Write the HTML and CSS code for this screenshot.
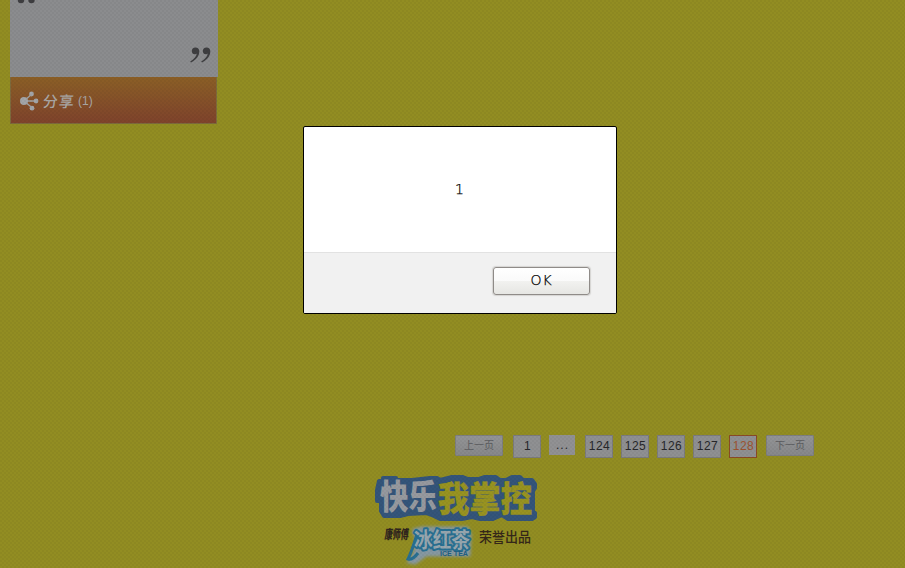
FILE: index.html
```html
<!DOCTYPE html>
<html lang="zh-CN">
<head>
<meta charset="utf-8">
<title>快乐我掌控</title>
<link rel="stylesheet" href="styles.css">
</head>
<body>
<main class="page">
  <section class="card">
    <div class="quote">
      <svg class="quote-open" width="20" height="4" viewBox="0 0 20 4"><circle cx="4" cy="0" r="3.2"/><circle cx="14.5" cy="0" r="3.2"/></svg>
      <svg class="quote-close" width="21" height="16" viewBox="0 0 21 16"><path id="mark" d="M5.500.5C3 .5 1.800 2.100 1.800 4c0 2 1.300 3.300 3 3.300 1 0 1.600-.3 2-.7C6.400 9.700 3.800 12.200.2 14.500l.8 1C6 13.200 9.300 9 9.300 4.600 9.300 2 7.800.5 5.500.5z"/><use href="#mark" x="11"/></svg>
    </div>
    <div class="share">
      <svg class="share-icon" width="20" height="20" viewBox="0 0 20 20"><path d="M4 10L12 3M4 10h12M4 10l9 7.500"/><circle cx="4" cy="10" r="4"/><circle cx="11.500" cy="3" r="2.400"/><circle cx="16" cy="10" r="2.400"/><circle cx="12" cy="17.200" r="2.400"/></svg>
      <span class="share-label">分享</span>
      <span class="share-count">(1)</span>
    </div>
  </section>
  <footer class="footer">
    <nav class="pager">
      <a class="step">上一页</a>
      <a class="num first">1</a>
      <span class="dots">...</span>
      <a class="num">124</a>
      <a class="num">125</a>
      <a class="num">126</a>
      <a class="num">127</a>
      <a class="num current">128</a>
      <a class="step">下一页</a>
    </nav>
    <svg class="logo" width="170" height="98" viewBox="370 470 170 98">
      <defs>
        <filter id="glow" x="-20%" y="-30%" width="140%" height="160%"><feGaussianBlur stdDeviation="1.800"/></filter>
      </defs>
      <path class="title-edge" d="M379 481H383V478H396V480H412L430 478H437L440 480L452 477H463L468 479H479L485 477H496L500 480H506L512 477H520L523 480H532L535 484V488L533 491V511L535 513V517L532 519H508L502 515L493 519H480L472 517L462 519H440L434 516L426 513L408 514L400 516H384L381 511V501H377V490Z"/>
      <text class="title white" x="380" y="509" font-size="34" textLength="57" lengthAdjust="spacingAndGlyphs">快乐</text>
      <text class="title gold" x="438" y="512" font-size="35" textLength="94" lengthAdjust="spacingAndGlyphs">我掌控</text>
      <g transform="skewX(-6)"><text class="maker" x="441" y="539" font-size="13" textLength="24" lengthAdjust="spacingAndGlyphs">康师傅</text></g>
      <path class="halo" filter="url(#glow)" d="M414 530l8-2h45l3 6-1 21h-43l-11 8-6-1 5-8 3-12z"/>
      <path class="swoosh" d="M417 534c-3 10-5 17-9 25 3 1 7-2 10-6"/>
      <text class="tea" x="414" y="547" font-size="21" textLength="56" lengthAdjust="spacingAndGlyphs">冰红茶</text>
      <text class="english" x="440" y="556" font-size="6.500" textLength="28" lengthAdjust="spacingAndGlyphs">ICE TEA</text>
      <text class="credit" x="479" y="542" font-size="13.500" textLength="52" lengthAdjust="spacingAndGlyphs">荣誉出品</text>
    </svg>
  </footer>
</main>
<div class="overlay">
  <div class="dialog" role="alertdialog">
    <p class="message">1</p>
    <div class="actions"><button class="ok">OK</button></div>
  </div>
</div>
</body>
</html>
```
FILE: styles.css
```css
* { box-sizing: border-box; }
body {
  margin: 0;
  height: 568px;
  overflow: hidden;
  background-color: #928d22;
  font-family: "Liberation Sans", "Noto Sans CJK SC", sans-serif;
}
.page {
  height: 568px;
  display: flex;
  flex-direction: column;
  justify-content: space-between;
}
.card { width: 208px; margin-left: 10px; }
.quote {
  height: 77px;
  padding: 0 7px 14px 7px;
  display: flex;
  flex-direction: column;
  justify-content: space-between;
  background: #8b8c8e;
  fill: #3e3e40;
}
.quote-close { align-self: flex-end; }
.share {
  width: 207px;
  height: 47px;
  padding: 2px 0 0 10px;
  display: flex;
  align-items: center;
  background: linear-gradient(#8b5f26, #7f432c);
  border: solid #7d6a3c;
  border-width: 0 1px 1px;
  color: #a9a6a4;
}
.share-icon { fill: #a3a5a8; stroke: none; margin-left: -1px; }
.share-icon path { stroke: #a3a5a8; stroke-width: 1.3; }
.share-label {
  margin-left: 3px;
  font: 500 15px/20px "Noto Sans CJK SC", sans-serif;
  letter-spacing: 1px;
  transform: skewX(-4deg);
}
.share-count { margin-left: 3px; font-size: 12px; }
.footer { height: 133px; }
.pager {
  height: 35px;
  padding-left: 455px;
  display: flex;
  align-items: flex-start;
  font-size: 12px;
  color: #27272a;
}
.step {
  width: 48px;
  height: 21px;
  margin-right: 10px;
  border: 1px solid #7d7e80;
  border-radius: 1px;
  background: linear-gradient(#939496, #87888a);
  color: #5b5c5f;
  font: 10px/18px "Noto Sans CJK SC", sans-serif;
  text-align: center;
}
.num {
  width: 28px;
  height: 23px;
  margin-right: 8px;
  border: 1px solid #7b7b7d;
  background: #8f9092;
  line-height: 21px;
  text-align: center;
  letter-spacing: .5px;
  text-indent: 1px;
}
.dots {
  width: 26px;
  height: 20px;
  margin-right: 10px;
  background: #919193;
  line-height: 20px;
  text-align: center;
  letter-spacing: 1px;
  text-indent: 1px;
}
.current { color: #9c5330; border-color: #8b4b25; margin-right: 9px; }
.logo {
  display: block;
  margin-left: 370px;
  font-family: "Noto Sans CJK SC", sans-serif;
}
.title { font-weight: 900; }
.title-edge { fill: #34557a; stroke: #34557a; stroke-width: 4; stroke-linejoin: round; }
.white { fill: #96999f; }
.gold { fill: #989321; stroke: #989321; stroke-width: .5; }
.maker { font-weight: 900; fill: #30251d; }
.halo { fill: #8698a2; stroke: #8698a2; stroke-width: 3; }
.swoosh { fill: none; stroke: #286f91; stroke-width: 3; }
.tea {
  font-weight: 700;
  fill: #97a6ae;
  stroke: #286f91;
  stroke-width: 4;
  stroke-linejoin: round;
  paint-order: stroke;
}
.english { font-family: "Liberation Sans", sans-serif; font-weight: 700; fill: #205f82; }
.credit { font-weight: 500; fill: #352719; }
.overlay {
  position: absolute;
  inset: 0;
  padding: 126px 0 0 303px;
  background-image:
    radial-gradient(circle at 1px 1px, rgba(0, 0, 0, .035) 1px, transparent 1.2px),
    radial-gradient(circle at 3px 3px, rgba(0, 0, 0, .035) 1px, transparent 1.2px);
  background-size: 4px 4px;
}
.dialog {
  width: 314px;
  height: 188px;
  border: 1px solid #000;
  border-radius: 2px;
  background: #fff;
  overflow: hidden;
  color: #000;
  font-family: "DejaVu Sans Light", "DejaVu Sans", sans-serif;
  font-weight: 200;
  -webkit-text-stroke: .25px #000;
}
.message {
  height: 125px;
  margin: 0;
  font-size: 14px;
  line-height: 124px;
  text-align: center;
  text-indent: -1px;
}
.actions {
  height: 61px;
  padding: 14px 26px 0 0;
  display: flex;
  justify-content: flex-end;
  align-items: flex-start;
  border-top: 1px solid #e2e2e2;
  background: #f1f1f1;
}
.ok {
  width: 97px;
  height: 28px;
  padding: 0 0 2px;
  border: 1px solid #8f8b88;
  border-radius: 3px;
  background: linear-gradient(#fff, #fafafa 50%, #f2f2f0 50%, #e6e6e3);
  box-shadow: 0 0 1px 1px #d5d4d2;
  color: #000;
  font: inherit;
  font-size: 14px;
  letter-spacing: 1px;
}
```
